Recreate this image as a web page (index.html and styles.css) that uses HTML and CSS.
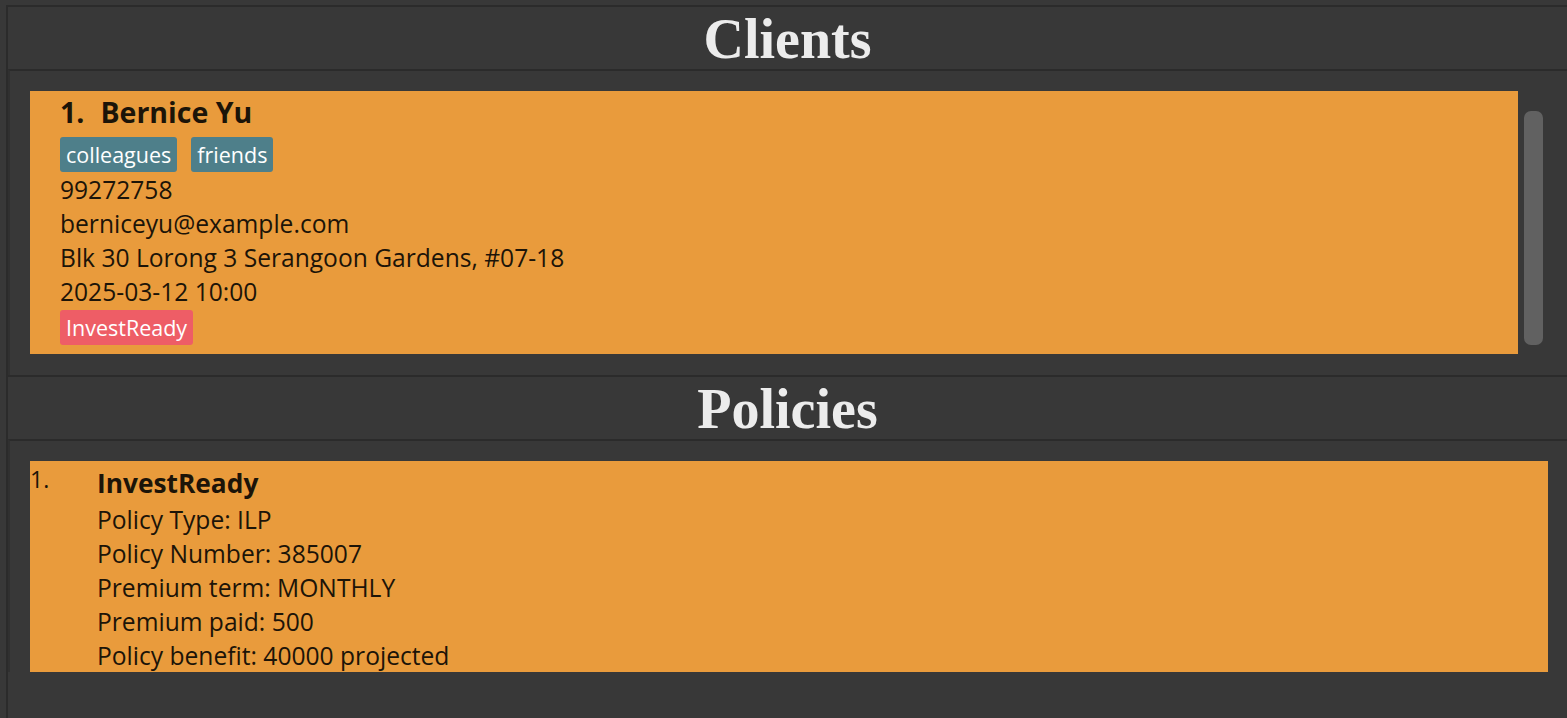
FILE: index.html
```html
<!DOCTYPE html>
<html lang="en">
<head>
  <meta charset="UTF-8">
  <title>Clients</title>
  <link rel="stylesheet" href="styles.css">
</head>
<body>
  <div class="app">
    <div class="title">Clients</div>
    <div class="list clients">
      <div class="card person">
        <div class="name"><span class="index">1.</span>Bernice Yu</div>
        <div class="tags">
          <span class="tag">colleagues</span>
          <span class="tag">friends</span>
        </div>
        <div class="line">99272758</div>
        <div class="line">berniceyu@example.com</div>
        <div class="line">Blk 30 Lorong 3 Serangoon Gardens, #07-18</div>
        <div class="line">2025-03-12 10:00</div>
        <div class="tags">
          <span class="tag policy">InvestReady</span>
        </div>
      </div>
      <div class="scrollbar"><div class="thumb"></div></div>
    </div>
    <div class="title bordered">Policies</div>
    <div class="list policies">
      <div class="card policy-card">
        <div class="pindex">1.</div>
        <div class="pbody">
          <div class="pname">InvestReady</div>
          <div class="line">Policy Type: ILP</div>
          <div class="line">Policy Number: 385007</div>
          <div class="line">Premium term: MONTHLY</div>
          <div class="line">Premium paid: 500</div>
          <div class="line">Policy benefit: 40000 projected</div>
        </div>
      </div>
    </div>
  </div>
</body>
</html>
```

FILE: styles.css
```css
body {
  margin: 0;
  background-color: #383838;
  font-family: 'Open Sans', sans-serif;
  overflow: hidden;
}

.app {
  margin: 5px 0 0 6px;
  border-top: 2px solid #2b2b2b;
  border-left: 2px solid #2b2b2b;
  height: calc(100vh - 7px);
}

.title {
  height: 62px;
  line-height: 64px;
  text-align: center;
  font-family: 'Liberation Serif', serif;
  font-weight: bold;
  font-size: 56px;
  color: #ececec;
}

.title.bordered {
  border-top: 2px solid #2b2b2b;
}

.list {
  border-top: 2px solid #2b2b2b;
  border-left: 2px solid #303030;
  display: flex;
  align-items: flex-start;
}

.clients {
  height: 263px;
  padding: 20px 24px 21px 20px;
}

.policies {
  padding: 20px 19px 0 20px;
}

.card {
  background-color: #e99b3c;
  color: #1c1408;
}

.person {
  flex: 1;
  height: 263px;
  box-sizing: border-box;
  padding: 0 30px;
}

.name {
  font-size: 28.5px;
  font-weight: bold;
  height: 45px;
  line-height: 43px;
}

.index {
  margin-right: 16px;
}

.tags {
  display: flex;
  gap: 14px;
  height: 37px;
  align-items: center;
}

.tag {
  color: #ffffff;
  background-color: #4e7f8a;
  border-radius: 3px;
  font-size: 21.5px;
  height: 35px;
  line-height: 35px;
  padding: 0 6px;
}

.tag.policy {
  background-color: #ee5d66;
}

.line {
  font-size: 24.6px;
  height: 34px;
  line-height: 34px;
}

.scrollbar {
  margin: 20px 0 0 6px;
  width: 19px;
}

.thumb {
  height: 234px;
  background-color: #616161;
  border-radius: 7px;
}

.policy-card {
  flex: 1;
  display: flex;
  height: 211px;
}

.pindex {
  width: 67px;
  font-size: 23px;
  line-height: 36px;
}

.pbody {
  padding-top: 3px;
}

.pname {
  font-size: 26.3px;
  font-weight: bold;
  height: 39px;
  line-height: 39px;
}
```
